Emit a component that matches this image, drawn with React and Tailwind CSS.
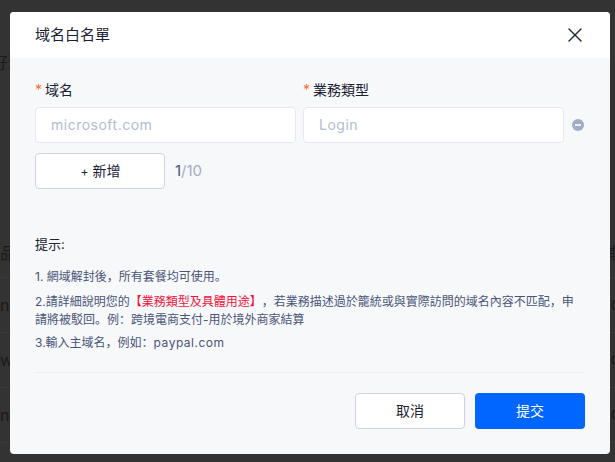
import { X } from 'lucide-react'

const font = { fontFamily: 'Inter, "Noto Sans CJK SC", sans-serif' }

// what shows of the page behind the dialog
const rows = [
  { left: '品', right: '期', height: 'h-[50px]' },
  { left: 'n', right: 'O', height: 'h-[55px]' },
  { left: 'w', right: 'O', height: 'h-[55px]' },
  { left: 'n', right: 'O', height: 'h-[55px]' },
]

function Field({ label, placeholder, className }) {
  return (
    <div className={className}>
      <div className="h-[22px] flex items-center text-[14px] leading-[22px] text-[#1a2233]">
        <span className="text-[#ff6b35] mr-[3px]">*</span>
        {label}
      </div>
      <input
        readOnly
        placeholder={placeholder}
        className="mt-[6px] w-full h-[36px] rounded-[4px] border border-[#e6e7f0] bg-white px-[15px] pb-[2px] text-[14px] tracking-[0.5px] outline-none placeholder:text-[#b4bbd1]"
      />
    </div>
  )
}

export default function App() {
  return (
    <div className="relative w-[615px] h-[462px] overflow-hidden bg-[#333333] [text-spacing-trim:space-all]" style={font}>
      <div className="pt-[50px] text-[16px] text-[#1a1a1a]">
        <div className="h-[178px] -ml-[8px]">好道</div>
        {rows.map((r, i) => (
          <div key={i} className={r.height + ' flex items-center justify-between border-b border-[#3a3a3a] -mx-[8px]'}>
            <span className="ml-[8px]">{r.left}</span>
            <span>{r.right}</span>
          </div>
        ))}
      </div>

      <div className="absolute left-[10px] top-[12px] w-[600px] h-[442px] rounded-[4px] overflow-hidden bg-[#f7f8fa] flex flex-col">
        <div className="h-[46px] shrink-0 bg-white flex items-center justify-between pl-[25px] pr-[23px]">
          <span className="text-[15px] text-[#1a2233]">域名白名單</span>
          <X size={24} strokeWidth={1.4} className="text-[#1a2233]" />
        </div>

        <div className="flex-1 flex flex-col px-[25px] pt-[21px]">
          <div className="flex items-end">
            <Field label="域名" placeholder="microsoft.com" className="w-[261px]" />
            <Field label="業務類型" placeholder="Login" className="w-[261px] ml-[7px]" />
            <svg width="12" height="12" viewBox="0 0 12 12" className="ml-[8px] mb-[12px]">
              <circle cx="6" cy="6" r="6" fill="#a3acc6" />
              <rect x="3" y="5" width="6" height="2" fill="#eef0f6" />
            </svg>
          </div>

          <div className="flex items-center mt-[10px]">
            <button className="w-[130px] h-[36px] pb-[2px] pl-[1px] rounded-[4px] border border-[#cfd3e0] bg-white text-[14px] text-[#1a2233]"><span className="text-[12px]">+</span> 新增</button>
            <span className="ml-[10px] text-[15px] text-[#a3acc6]"><span className="text-[#4a5578]">1</span>/10</span>
          </div>

          <div className="mt-[45px] text-[13px] leading-[20px] text-[#1a2233]">提示:</div>
          <div className="mt-[14px] text-[12px] leading-[18px] text-[#4a5578]">
            <p>1. 網域解封後，所有套餐均可使用。</p>
            <p className="mt-[7px]">
              2.請詳細說明您的<span className="text-[#f0143c]">【業務類型及具體用途】</span>，若業務描述過於籠統或與實際訪問的域名內容不匹配，申請將被駁回。例：跨境電商支付-用於境外商家結算
            </p>
            <p className="mt-[5px]">3.輸入主域名，例如：<span className="tracking-[0.5px]">paypal.com</span></p>
          </div>

          <div className="mt-[20px] h-px bg-[#eceef3]" />

          <div className="flex justify-end gap-[10px] mt-[20px]">
            <button className="w-[110px] h-[36px] pb-[2px] rounded-[4px] border border-[#cfd3e0] bg-white text-[14px] text-[#1a2233]">取消</button>
            <button className="w-[110px] h-[36px] pb-[2px] rounded-[4px] bg-[#0066ff] text-[14px] text-white">提交</button>
          </div>
        </div>
      </div>
    </div>
  )
}
